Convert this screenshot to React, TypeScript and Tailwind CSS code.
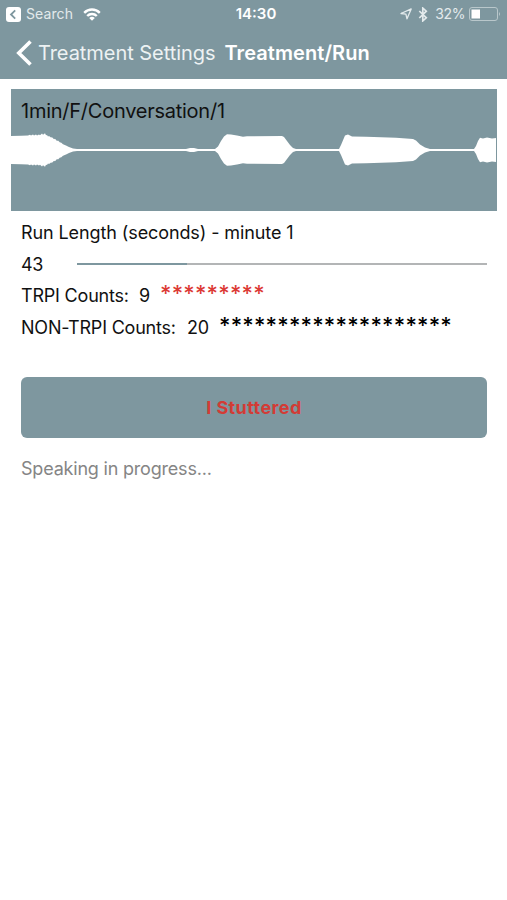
import type { ReactNode } from 'react'

const RUN = {
  name: '1min/F/Conversation/1',
  minute: 1,
  seconds: 43,
  progress: 26.8,
  trpi: 9,
  nonTrpi: 20
}

// [x, amplitude] pairs, mirrored around the centre line
const SAMPLES = [
  [0, 14], [10, 14.2], [17, 14.6], [19, 15.2], [20, 14.4], [22, 15.4], [23, 14.4], [25, 15.6], [26, 14.6], [28, 15.6],
  [29, 14.8], [31, 16.4], [32, 15.2], [34, 16.8], [35, 14.8], [36, 15], [37, 13.4], [38, 14], [40, 12.4], [41, 12.8],
  [43, 10.8], [44, 11.2], [46, 9], [47, 9.4], [49, 7.4], [50, 7.6], [52, 5.8], [55, 4.6], [58, 3], [62, 1.6],
  [66, 1.1], [175, 1.1], [179, 2], [183, 2], [187, 1.1], [204, 1.1], [207, 3.5], [210, 9], [213, 13.4], [216, 15.8],
  [220, 15.4], [226, 14.6], [232, 13.2], [236, 13.8], [271, 14], [273, 13], [276, 9], [279, 5], [282, 2], [285, 1.1],
  [328, 1.1], [330, 5], [334, 14.4], [337, 15.6], [341, 13.6], [355, 13.2], [385, 12.2], [402, 11], [405, 9.6], [409, 5.6],
  [414, 2.6], [419, 1.1], [463, 1.1], [465, 4], [467, 9], [469, 12.2], [472, 11.6], [476, 12.4], [481, 11.4], [485, 12]
]

export default function App() {
  return (
    <div className="min-h-[900px] w-full bg-white font-['Inter','Liberation_Sans',sans-serif] text-lg text-[#111]">
      <header className="h-[79px] bg-[#7e979f] text-white">
        <StatusBar />
        <NavBar />
      </header>

      <main className="pt-2.5 pr-2.5 pl-[11px]">
        <Waveform name={RUN.name} />

        <div className="px-2.5 pt-[5px]">
          <Row>
            <span className="pt-px tracking-[-0.1px]">Run Length (seconds) - minute {RUN.minute}</span>
          </Row>
          <Row>
            <span className="w-14 pt-px tracking-[-0.3px]">{RUN.seconds}</span>
            <div className="h-0.5 flex-1 bg-[#b3b5b6]">
              <div className="h-full bg-[#7e979f]" style={{ width: `${RUN.progress}%` }} />
            </div>
          </Row>
          <Row>
            <span className="w-[108px] tracking-[-0.2px]">TRPI Counts:</span>
            <span className="ml-2.5 w-[21px]">{RUN.trpi}</span>
            <Stars count={RUN.trpi} className="text-[#dc3a35]" />
          </Row>
          <Row>
            <span className="w-[156px] tracking-[-0.2px]">NON-TRPI Counts:</span>
            <span className="ml-2.5 w-8 tracking-[-0.3px]">{RUN.nonTrpi}</span>
            <Stars count={RUN.nonTrpi} className="text-black" />
          </Row>

          <button className="mt-[33px] flex h-[61px] w-full items-center justify-center rounded-md bg-[#7e979f] font-bold tracking-[0.4px] text-[#d33b35]">
            I Stuttered
          </button>
          <p className="mt-[17px] leading-7 tracking-[-0.2px] text-[#858585]">Speaking in progress...</p>
        </div>
      </main>
    </div>
  )
}

function StatusBar() {
  return (
    <div className="grid h-7 grid-cols-3 items-center pr-1.5 pl-1.5 text-sm">
      <div className="flex items-center">
        <svg width="15" height="15" viewBox="0 0 15 15">
          <rect width="15" height="15" rx="3" fill="white" />
          <path d="M9.2 3.4 5 7.5l4.2 4.1" fill="none" stroke="#7e979f" strokeWidth="1.8" />
        </svg>
        <span className="ml-[5px] tracking-[0.1px] text-[#e3eaec]">Search</span>
        <svg className="ml-2.5" width="18" height="13" viewBox="0 0 18 13" fill="none" stroke="white" strokeWidth="2.4">
          <path d="M1.2 4.8a11 11 0 0 1 15.6 0" />
          <path d="M4.2 8a6.8 6.8 0 0 1 9.6 0" />
          <path d="M9 12.8 6.2 10a4 4 0 0 1 5.6 0Z" fill="white" stroke="none" />
        </svg>
      </div>
      <div className="pl-[5px] text-center text-[15px] font-semibold">14:30</div>
      <div className="flex items-center justify-end text-[#e3eaec]">
        <svg width="12" height="12" viewBox="0 0 12 12" fill="none" stroke="currentColor" strokeWidth="1.3">
          <path d="M11.2.9 7 10.8 5.9 6.2 1 5.5Z" strokeLinejoin="round" />
        </svg>
        <svg className="ml-1.5" width="10" height="15" viewBox="0 0 9 15" fill="none" stroke="currentColor" strokeWidth="1.7">
          <path d="m.8 4 7 6.8-3.5 3.1V1.1l3.5 3.1-7 6.8" />
        </svg>
        <span className="ml-[7px] tracking-[-0.4px]">32%</span>
        <svg className="ml-1" width="32" height="14" viewBox="0 0 32 14">
          <rect x=".5" y=".5" width="28" height="13" rx="2.5" fill="none" stroke="#b9c7cb" />
          <rect x="2.5" y="2.5" width="8.5" height="9" fill="white" />
          <path d="M30 5a2.5 2.5 0 0 1 0 4Z" fill="#b9c7cb" />
        </svg>
      </div>
    </div>
  )
}

function NavBar() {
  return (
    <nav className="flex h-[50px] items-center pl-4 text-xl">
      <svg width="17" height="26" viewBox="0 0 17 26" fill="none" stroke="white" strokeWidth="3.6">
        <path d="M14.5 1.5 2.8 13l11.7 11.5" />
      </svg>
      <span className="ml-[5px] tracking-[-0.05px] text-[#edf2f3]">Treatment Settings</span>
      <span className="ml-[9px] font-semibold tracking-[0.08px]">Treatment/Run</span>
    </nav>
  )
}

function Waveform({ name }: { name: string }) {
  const top = SAMPLES.map(([x, amp]) => `${x},${61 - amp}`)
  const bottom = SAMPLES.map(([x, amp]) => `${x},${61 + amp}`).reverse()

  return (
    <section className="grid h-[122px] bg-[#7e979f]">
      <h1 className="col-start-1 row-start-1 px-2.5 pt-[7px] text-xl leading-[30px] tracking-[-0.25px]">{name}</h1>
      <svg className="col-start-1 row-start-1" width="486" height="122" viewBox="0 0 486 122" fill="white">
        <polygon points={[...top, ...bottom].join(' ')} />
      </svg>
    </section>
  )
}

function Row({ children }: { children: ReactNode }) {
  return <div className="flex h-8 items-center whitespace-nowrap">{children}</div>
}

function Stars({ count, className }: { count: number; className: string }) {
  return <span className={`pb-1.5 text-[22px] font-medium tracking-[0.2px] ${className}`}>{'*'.repeat(count)}</span>
}
